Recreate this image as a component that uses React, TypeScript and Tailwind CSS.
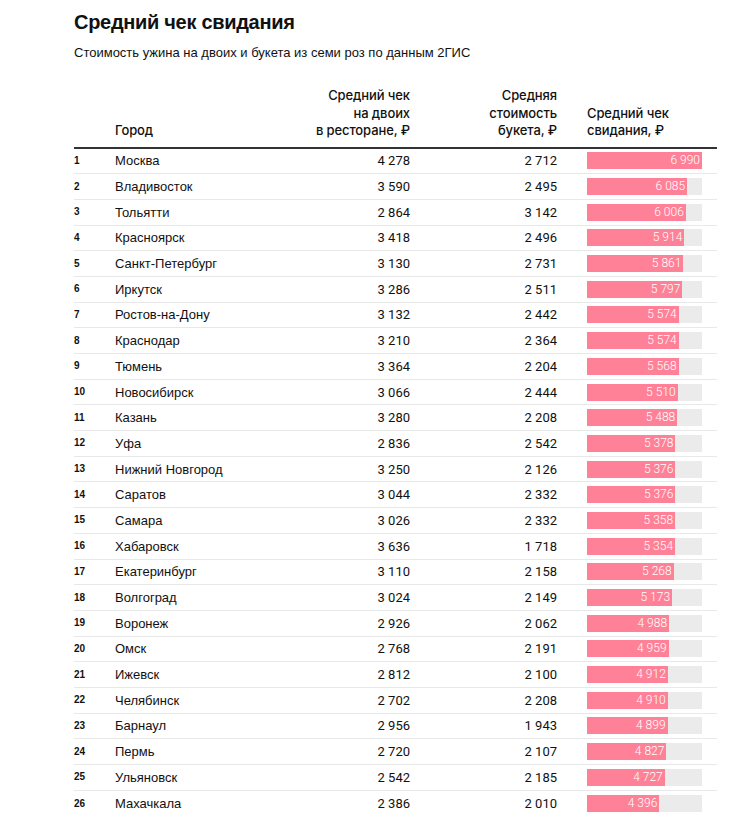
const rows: [string, number, number, number][] = [
  ["Москва", 4278, 2712, 6990],
  ["Владивосток", 3590, 2495, 6085],
  ["Тольятти", 2864, 3142, 6006],
  ["Красноярск", 3418, 2496, 5914],
  ["Санкт-Петербург", 3130, 2731, 5861],
  ["Иркутск", 3286, 2511, 5797],
  ["Ростов-на-Дону", 3132, 2442, 5574],
  ["Краснодар", 3210, 2364, 5574],
  ["Тюмень", 3364, 2204, 5568],
  ["Новосибирск", 3066, 2444, 5510],
  ["Казань", 3280, 2208, 5488],
  ["Уфа", 2836, 2542, 5378],
  ["Нижний Новгород", 3250, 2126, 5376],
  ["Саратов", 3044, 2332, 5376],
  ["Самара", 3026, 2332, 5358],
  ["Хабаровск", 3636, 1718, 5354],
  ["Екатеринбург", 3110, 2158, 5268],
  ["Волгоград", 3024, 2149, 5173],
  ["Воронеж", 2926, 2062, 4988],
  ["Омск", 2768, 2191, 4959],
  ["Ижевск", 2812, 2100, 4912],
  ["Челябинск", 2702, 2208, 4910],
  ["Барнаул", 2956, 1943, 4899],
  ["Пермь", 2720, 2107, 4827],
  ["Ульяновск", 2542, 2185, 4727],
  ["Махачкала", 2386, 2010, 4396],
];

const MAX = 6990;
const TRACK = 115;

// 4278 -> "4 278"
const fmt = (n: number) => String(n).replace(/\B(?=(\d{3})+(?!\d))/g, "\u00a0");

const cols = "grid grid-cols-[41px_185px_110px_147px_30px_115px_15px]";

export default function App() {
  return (
    <div className="min-h-screen bg-white pl-[74px] pt-[8px] text-[#111] font-['Liberation_Sans',Arial,sans-serif]">
      <h1 className="text-[20px] leading-[28px] font-bold tracking-[-0.3px]">
        Средний чек свидания
      </h1>
      <p className="mt-[8px] text-[13px] leading-[18px]">
        Стоимость ужина на двоих и букета из семи роз по данным 2ГИС
      </p>

      <div className="mt-[25px] w-[643px]">
        <div
          className={`${cols} items-end border-b-2 border-[#333] pb-[7px] text-[13px] leading-[17.5px] font-medium tracking-[-0.1px] font-['Inter',sans-serif]`}
        >
          <div />
          <div>Город</div>
          <div className="text-right">
            Средний чек
            <br />
            на двоих
            <br />в ресторане, ₽
          </div>
          <div className="text-right">
            Средняя
            <br />
            стоимость
            <br />
            букета, ₽
          </div>
          <div />
          <div>
            Средний чек
            <br />
            свидания, ₽
          </div>
          <div />
        </div>

        {rows.map(([city, dinner, flowers, total], i) => (
          <div
            key={city}
            className={`${cols} h-[25.7px] items-center ${
              i < rows.length - 1 ? "border-b border-[#e8e8e8]" : ""
            }`}
          >
            <div className="text-[10px] font-bold leading-none">{i + 1}</div>
            <div className="text-[13px] leading-none">{city}</div>
            <div className="text-right text-[13px] leading-none font-['Roboto',sans-serif]">
              {fmt(dinner)}
            </div>
            <div className="text-right text-[13px] leading-none font-['Roboto',sans-serif]">
              {fmt(flowers)}
            </div>
            <div />
            <div className="h-[17px] bg-[#ebebeb]">
              <div
                className="h-full bg-[#ff8197] pr-[2px] text-right text-[12px] leading-[17px] font-light text-white font-['Roboto',sans-serif]"
                style={{ width: `${(total / MAX) * TRACK}px` }}
              >
                {fmt(total)}
              </div>
            </div>
            <div />
          </div>
        ))}
      </div>
    </div>
  );
}
